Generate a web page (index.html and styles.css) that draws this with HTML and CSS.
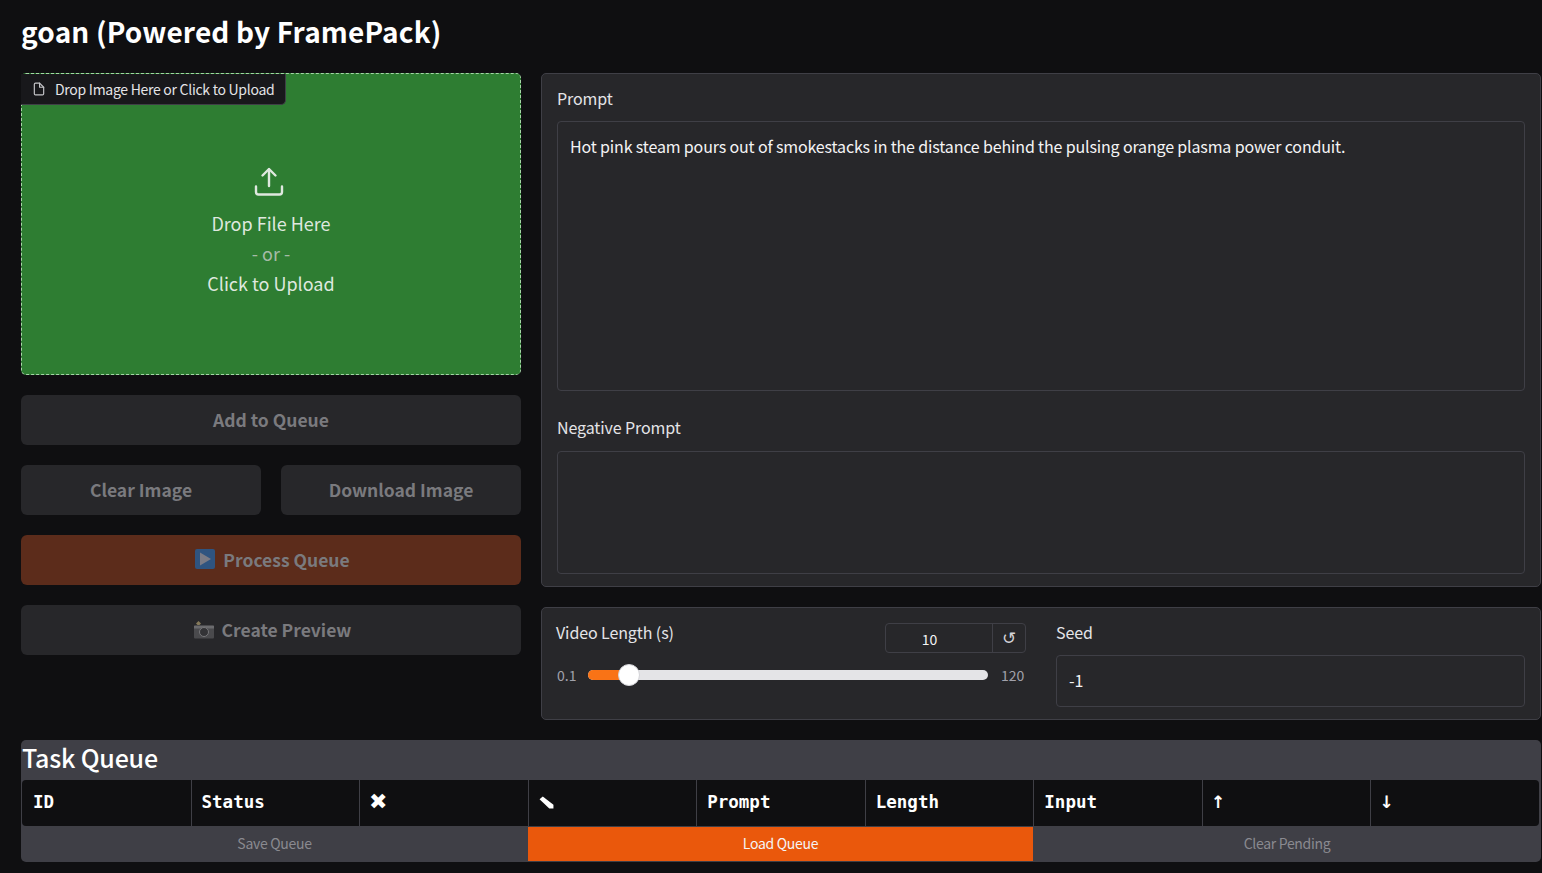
FILE: index.html
```html
<!DOCTYPE html>
<html lang="en">
<head>
    <meta charset="UTF-8">
    <meta name="viewport" content="width=device-width, initial-scale=1.0">
    <title>goan (Powered by FramePack)</title>
    <link rel="stylesheet" href="styles.css">
</head>
<body>

    <h1 class="page-title">goan (Powered by FramePack)</h1>

    <div class="main-row">
        <!-- Left column: upload and actions -->
        <div class="left-col">
            <div class="upload-box">
                <div class="upload-tab">
                    <svg class="tab-icon" viewBox="0 0 24 24" fill="none" stroke="currentColor" stroke-width="2" stroke-linecap="round" stroke-linejoin="round">
                        <path d="M13 2H6a2 2 0 0 0-2 2v16a2 2 0 0 0 2 2h12a2 2 0 0 0 2-2V9z"/>
                        <path d="M13 2v7h7"/>
                    </svg>
                    <span>Drop Image Here or Click to Upload</span>
                </div>
                <svg class="upload-icon" viewBox="0 0 30 30" fill="none" stroke="currentColor" stroke-width="2.4" stroke-linecap="round" stroke-linejoin="round">
                    <path d="M15 19V2.500"/>
                    <path d="M8.500 8.500 15 2l6.500 6.500"/>
                    <path d="M2 19.500V25a2.500 2.500 0 0 0 2.500 2.500h21A2.500 2.500 0 0 0 28 25v-5.500"/>
                </svg>
                <div class="upload-line">Drop File Here</div>
                <div class="upload-line upload-or">- or -</div>
                <div class="upload-line">Click to Upload</div>
            </div>

            <button class="btn">Add to Queue</button>
            <div class="btn-row">
                <button class="btn">Clear Image</button>
                <button class="btn">Download Image</button>
            </div>
            <button class="btn btn-primary btn-with-icon">
                <svg class="btn-icon" viewBox="0 0 20 20">
                    <rect width="20" height="20" rx="2" fill="#2f5480"/>
                    <path d="M5 3.500 16 10 5 16.500z" fill="#7b7b85"/>
                </svg>
                Process Queue
            </button>
            <button class="btn btn-with-icon">
                <svg class="btn-icon" viewBox="0 0 20 20">
                    <path d="M2 4.500 4.500 2 7 4.500 4.500 7z" fill="#85795a"/>
                    <rect y="6" width="20" height="13.500" rx="1" fill="#4a4a4d"/>
                    <rect y="7" width="20" height="2.500" fill="#6b6b6e"/>
                    <circle cx="10" cy="13" r="4.500" fill="#333336" stroke="#77777a"/>
                </svg>
                Create Preview
            </button>
        </div>

        <!-- Right column: prompts and settings -->
        <div class="right-col">
            <div class="panel prompt-panel">
                <label class="field-label">Prompt</label>
                <textarea class="text-box prompt-box">Hot pink steam pours out of smokestacks in the distance behind the pulsing orange plasma power conduit.</textarea>
                <label class="field-label negative-label">Negative Prompt</label>
                <textarea class="text-box negative-box"></textarea>
            </div>

            <div class="panel settings-panel">
                <div class="length-group">
                    <div class="length-head">
                        <label class="field-label">Video Length (s)</label>
                        <div class="number-box">
                            <span class="number-value">10</span>
                            <span class="number-reset">↺</span>
                        </div>
                    </div>
                    <div class="slider-row">
                        <span class="slider-end">0.1</span>
                        <div class="slider-track">
                            <div class="slider-fill"></div>
                            <div class="slider-thumb"></div>
                        </div>
                        <span class="slider-end">120</span>
                    </div>
                </div>
                <div class="seed-group">
                    <label class="field-label">Seed</label>
                    <input class="seed-box" type="text" value="-1">
                </div>
            </div>
        </div>
    </div>

    <!-- Task queue -->
    <div class="queue">
        <h2 class="queue-title">Task Queue</h2>
        <div class="queue-table">
            <div class="queue-cell">ID</div>
            <div class="queue-cell">Status</div>
            <div class="queue-cell queue-symbol">✖</div>
            <div class="queue-cell">
                <svg class="pencil-icon" viewBox="0 0 16 14">
                    <path d="M4 .5 15.500 9.500 15.500 13.500 11 13.500 .5 3.500z" fill="#fff"/>
                </svg>
            </div>
            <div class="queue-cell">Prompt</div>
            <div class="queue-cell">Length</div>
            <div class="queue-cell">Input</div>
            <div class="queue-cell queue-arrow">↑</div>
            <div class="queue-cell queue-arrow">↓</div>
        </div>
        <div class="queue-actions">
            <button class="queue-btn">Save Queue</button>
            <button class="queue-btn queue-btn-primary">Load Queue</button>
            <button class="queue-btn">Clear Pending</button>
        </div>
    </div>

</body>
</html>
```

FILE: styles.css
```css
/* General body styling */
body {
    margin: 0;
    padding: 0 1px 0 21px;
    height: 873px;
    box-sizing: border-box;
    overflow: hidden;
    background-color: #0f0f11;
    color: #f4f4f5;
    font-family: "Noto Sans CJK SC", "Noto Sans", sans-serif;
}

.page-title {
    margin: 0;
    padding-top: 11px;
    height: 73px;
    box-sizing: border-box;
    font-size: 28px;
    font-weight: 700;
    letter-spacing: 0.16px;
    line-height: 40px;
    color: #fff;
}

/* Two main columns */
.main-row {
    display: flex;
    gap: 20px;
}

.left-col {
    width: 500px;
    flex-shrink: 0;
    display: flex;
    flex-direction: column;
    gap: 20px;
}

.right-col {
    flex: 1;
    display: flex;
    flex-direction: column;
    gap: 20px;
}

/* Upload area */
.upload-box {
    position: relative;
    height: 302px;
    box-sizing: border-box;
    border: 1px dashed #a5d6a7;
    border-radius: 5px;
    background-color: #2e7d32;
    display: flex;
    flex-direction: column;
    align-items: center;
    padding-top: 93px;
    color: #dfe8df;
}

.upload-tab {
    position: absolute;
    top: 0;
    left: -1px;
    height: 31px;
    width: 265px;
    display: flex;
    align-items: center;
    gap: 9px;
    padding-left: 11px;
    box-sizing: border-box;
    background-color: #18181b;
    border-right: 1px solid #3f3f46;
    border-bottom: 1px solid #3f3f46;
    border-radius: 0 0 5px 0;
    color: #e4e4e7;
    font-size: 14px;
    letter-spacing: -0.28px;
    white-space: nowrap;
}

.tab-icon {
    width: 14px;
    height: 14px;
    color: #c4c4c8;
}

.upload-icon {
    width: 30px;
    height: 30px;
    margin: 0 5px 11px 0;
}

.upload-line {
    font-size: 18px;
    line-height: 30px;
}

.upload-or {
    color: #a6bba7;
}

/* Buttons */
.btn {
    height: 50px;
    width: 100%;
    border: none;
    border-radius: 6px;
    background-color: #27272a;
    color: #7a7a7e;
    font-family: inherit;
    font-size: 17.5px;
    font-weight: 700;
    display: flex;
    align-items: center;
    justify-content: center;
    gap: 8px;
    padding: 0 0 2px;
}

.btn-with-icon {
    padding-left: 3px;
}

.btn-row {
    display: flex;
    gap: 20px;
}

.btn-primary {
    background-color: #5c2c1b;
}

.btn-icon {
    width: 20px;
    height: 20px;
}

/* Panels */
.panel {
    box-sizing: border-box;
    background-color: #27272a;
    border: 1px solid #3f3f46;
    border-radius: 5px;
}

.prompt-panel {
    height: 514px;
    padding: 12px 15px 0 15px;
    display: flex;
    flex-direction: column;
}

.field-label {
    display: block;
    font-size: 16px;
    line-height: 24px;
    letter-spacing: -0.1px;
    color: #e4e4e7;
}

.text-box {
    display: block;
    box-sizing: border-box;
    width: 100%;
    margin: 0;
    resize: none;
    outline: none;
    background-color: #27272a;
    border: 1px solid #3f3f46;
    border-radius: 4px;
    padding: 12px;
    color: #f4f4f5;
    font-family: inherit;
    font-size: 16px;
    letter-spacing: -0.15px;
    line-height: 25px;
}

.prompt-box {
    margin-top: 11px;
    height: 270px;
}

.negative-label {
    margin-top: 24px;
}

.negative-box {
    margin-top: 12px;
    height: 123px;
}

/* Video length and seed */
.settings-panel {
    height: 113px;
    padding: 12px 15px 0 14px;
    display: flex;
    gap: 30px;
}

.length-group {
    width: 470px;
    flex-shrink: 0;
}

.length-head {
    display: flex;
    justify-content: space-between;
}

.number-box {
    width: 141px;
    height: 30px;
    margin-top: 3px;
    box-sizing: border-box;
    display: flex;
    border: 1px solid #3f3f46;
    border-radius: 4px;
    font-size: 14px;
}

.number-value {
    width: 107px;
    box-sizing: border-box;
    padding-right: 19px;
    text-align: center;
    line-height: 30px;
    border-right: 1px solid #3f3f46;
}

.number-reset {
    flex: 1;
    text-align: center;
    line-height: 28px;
    font-family: "DejaVu Sans", sans-serif;
    font-size: 17px;
    color: #d4d4d8;
}

.slider-row {
    display: flex;
    align-items: center;
    margin-top: 7px;
    height: 30px;
}

.slider-end {
    font-size: 14px;
    color: #a1a1aa;
    width: 31px;
    margin-left: 1px;
}

.slider-end:last-child {
    margin-left: 13px;
    width: 25px;
}

.slider-track {
    position: relative;
    width: 400px;
    height: 10px;
    border-radius: 5px;
    background-color: #e4e4e7;
}

.slider-fill {
    width: 41px;
    height: 10px;
    border-radius: 5px 0 0 5px;
    background-color: #f97316;
}

.slider-thumb {
    position: absolute;
    top: -6px;
    left: 30px;
    width: 22px;
    height: 22px;
    box-sizing: border-box;
    border-radius: 50%;
    background-color: #fff;
    border: 1px solid #d4d4d8;
}

.seed-group {
    flex: 1;
}

.seed-box {
    display: block;
    box-sizing: border-box;
    width: 100%;
    height: 52px;
    margin-top: 11px;
    padding: 0 12px 2px;
    background-color: #27272a;
    border: 1px solid #3f3f46;
    border-radius: 4px;
    outline: none;
    color: #f4f4f5;
    font-family: inherit;
    font-size: 16px;
}

/* Task queue */
.queue {
    margin-top: 20px;
    height: 122px;
    box-sizing: border-box;
    background-color: #3f3f46;
    border-radius: 5px;
    padding-top: 1px;
}

.queue-title {
    margin: 0 0 0 1px;
    height: 39px;
    font-size: 25px;
    font-weight: 500;
    letter-spacing: -0.2px;
    line-height: 32px;
    color: #fff;
}

.queue-table {
    display: grid;
    grid-template-columns: repeat(9, 1fr);
    height: 46px;
    margin: 0 2px 0 1px;
    background-color: #0f0f11;
    border-radius: 4px;
}

.queue-cell {
    padding: 0 10px;
    border-left: 1px solid #3f3f46;
    font-family: "DejaVu Sans Mono", "Liberation Mono", monospace;
    font-size: 17.5px;
    font-weight: bold;
    line-height: 44px;
    color: #fff;
}

.queue-cell:first-child {
    border-left: none;
    padding-left: 11px;
}

.queue-symbol {
    font-family: "DejaVu Sans", sans-serif;
    font-size: 22px;
    padding-left: 9px;
}

.queue-arrow {
    font-family: "DejaVu Sans", sans-serif;
    font-size: 17px;
    padding-left: 8px;
}

.pencil-icon {
    width: 15px;
    height: 13px;
    vertical-align: -1px;
}

.queue-actions {
    display: grid;
    grid-template-columns: 507px 505px 1fr;
    margin-top: 1px;
    height: 34px;
}

.queue-btn {
    border: none;
    padding: 0 0 2px;
    background-color: transparent;
    color: #8a8a90;
    font-family: inherit;
    font-size: 14px;
    letter-spacing: -0.3px;
}

.queue-btn-primary {
    background-color: #ea580c;
    color: #f4f4f5;
}
```
